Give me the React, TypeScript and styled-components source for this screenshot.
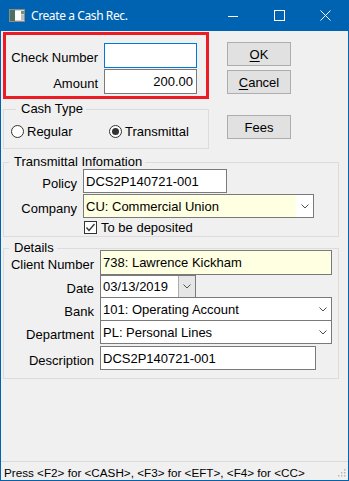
import styled, { createGlobalStyle } from "styled-components";

const GlobalStyle = createGlobalStyle`
  html, body {
    margin: 0;
    padding: 0;
    background: #ffffff;
  }
  body {
    font-family: "Liberation Sans", Arial, sans-serif;
    font-size: 13px;
    color: #000000;
  }
  * {
    box-sizing: border-box;
  }
`;

const Window = styled.div`
  width: 349px;
  height: 481px;
  display: flex;
  flex-direction: column;
  border: 1px solid #0063b1;
  border-top: none;
  background: #f0f0f0;
  overflow: hidden;
`;

const TitleBar = styled.div`
  height: 31px;
  flex-shrink: 0;
  background: #0063b1;
  display: flex;
  align-items: center;
  padding-left: 8px;
  color: #ffffff;
`;

const Title = styled.div`
  font-family: "Noto Sans", "Open Sans", sans-serif;
  font-size: 12px;
  letter-spacing: -0.4px;
  margin-left: 6px;
  flex: 1;
  white-space: nowrap;
`;

const CaptionButton = styled.div`
  width: 46px;
  height: 31px;
  display: flex;
  align-items: center;
  justify-content: center;
`;

const Body = styled.div`
  flex: 1;
  padding: 1px 0 0 2px;
  display: flex;
  flex-direction: column;
`;

const TopRow = styled.div`
  display: flex;
  align-items: flex-start;
`;

const LeftCol = styled.div`
  width: 206px;
  display: flex;
  flex-direction: column;
`;

const Highlight = styled.div`
  height: 67px;
  border: 3px solid #ed1c24;
  padding: 8px 0 0 0;
  display: grid;
  grid-template-columns: 92px 93px;
  grid-auto-rows: 25px;
  column-gap: 6px;
  row-gap: 1px;
`;

const Label = styled.div`
  text-align: right;
  white-space: nowrap;
  align-self: center;
  padding-top: 4px;
  line-height: 15px;
`;

const TextBox = styled.input<{ $w: number; $h: number; $focus?: boolean; $right?: boolean; $bg?: string }>`
  width: ${(p) => p.$w}px;
  height: ${(p) => p.$h}px;
  margin: 0;
  border: 1px solid ${(p) => (p.$focus ? "#0078d7" : "#7a7a7a")};
  background: ${(p) => p.$bg ?? "#ffffff"};
  font-family: "Liberation Sans", Arial, sans-serif;
  font-size: 13px;
  color: #000000;
  padding: 0 ${(p) => (p.$right ? 3 : 2)}px 0 2px;
  text-align: ${(p) => (p.$right ? "right" : "left")};
  outline: none;
`;

const ButtonCol = styled.div`
  margin: 10px 0 0 18px;
  display: flex;
  flex-direction: column;
`;

const Button = styled.div<{ $gap?: number }>`
  width: 64px;
  height: 24px;
  margin-top: ${(p) => p.$gap ?? 0}px;
  background: #e1e1e1;
  border: 1px solid #adadad;
  display: flex;
  align-items: center;
  justify-content: center;
  line-height: 15px;
  u {
    text-decoration: underline;
    text-underline-offset: 2px;
  }
`;

const Group = styled.fieldset<{ $w: number; $mt: number; $pb: number; $pl?: number }>`
  width: ${(p) => p.$w}px;
  margin: ${(p) => p.$mt}px 0 0 0;
  padding: 0 0 ${(p) => p.$pb}px ${(p) => p.$pl ?? 0}px;
  border: 1px solid #dcdcdc;
  min-width: 0;
`;

const Legend = styled.legend`
  margin-left: 5px;
  padding: 0 3px 0 5px;
  line-height: 14px;
  font-size: 13px;
  white-space: nowrap;
`;

const RadioRow = styled.div`
  margin-top: 8px;
  display: grid;
  grid-template-columns: 98px auto;
  height: 15px;
  align-items: center;
`;

const Option = styled.div`
  display: flex;
  align-items: center;
  gap: 3px;
  line-height: 15px;
`;

const RadioCircle = styled.span<{ $on?: boolean }>`
  width: 13px;
  height: 13px;
  border-radius: 50%;
  border: 1px solid #333333;
  background: #ffffff;
  display: flex;
  align-items: center;
  justify-content: center;
  &::after {
    content: "";
    width: 7px;
    height: 7px;
    border-radius: 50%;
    background: ${(p) => (p.$on ? "#333333" : "transparent")};
  }
`;

const Row = styled.div<{ $label: number; $h: number; $mt?: number }>`
  display: grid;
  grid-template-columns: ${(p) => p.$label}px auto;
  column-gap: 6px;
  height: ${(p) => p.$h}px;
  margin-top: ${(p) => p.$mt ?? 0}px;
  align-items: stretch;
  position: relative;
`;

const Combo = styled.div<{ $w: number }>`
  width: ${(p) => p.$w}px;
  border: 1px solid #7a7a7a;
  background: #ffffff;
  display: flex;
`;

const ComboText = styled.div<{ $bg?: string }>`
  flex: 1;
  background: ${(p) => p.$bg ?? "#ffffff"};
  padding-left: 2px;
  display: flex;
  align-items: center;
  white-space: nowrap;
`;

const ComboArrow = styled.div<{ $button?: boolean }>`
  width: 17px;
  display: flex;
  align-items: center;
  justify-content: center;
  background: ${(p) => (p.$button ? "#e6e6e6" : "#ffffff")};
  border-left: ${(p) => (p.$button ? "1px solid #adadad" : "none")};
`;

const CheckRow = styled.div`
  margin: 2px 0 0 80px;
  height: 14px;
  display: flex;
  align-items: center;
  gap: 4px;
  line-height: 15px;
`;

const CheckBox = styled.span`
  width: 13px;
  height: 13px;
  border: 1px solid #333333;
  background: #ffffff;
  display: flex;
  align-items: center;
  justify-content: center;
`;

const Spacer = styled.div`
  flex: 1;
`;

const StatusBar = styled.div`
  height: 19px;
  flex-shrink: 0;
  border-top: 1px solid #dadada;
  display: flex;
  align-items: center;
  padding: 2px 0 0 3px;
  font-size: 11.7px;
  white-space: nowrap;
`;

const Grip = styled.svg`
  margin-left: auto;
  margin-top: 4px;
  margin-right: 2px;
`;

function Chevron() {
  return (
    <svg width="8" height="5" viewBox="0 0 8 5">
      <polyline points="0.5,0.5 4,4 7.5,0.5" fill="none" stroke="#505050" strokeWidth="1" />
    </svg>
  );
}

function AppIcon() {
  return (
    <svg width="16" height="13" viewBox="0 0 16 13">
      <rect x="0.5" y="0.5" width="15" height="12" fill="#d4d4d4" stroke="#8c8c8c" />
      <rect x="1" y="1" width="5" height="11" fill="#4f6f5f" />
      <rect x="6" y="2" width="6" height="9" fill="#ffffff" />
      <rect x="12" y="2" width="3" height="3" fill="#6a9a6a" />
      <rect x="12" y="6" width="3" height="5" fill="#bcbcbc" />
    </svg>
  );
}

export default function App() {
  return (
    <>
      <GlobalStyle />
      <Window>
        <TitleBar>
          <AppIcon />
          <Title>Create a Cash Rec.</Title>
          <CaptionButton>
            <svg width="10" height="10" viewBox="0 0 10 10">
              <line x1="0" y1="5.5" x2="10" y2="5.5" stroke="#fff" strokeWidth="1" />
            </svg>
          </CaptionButton>
          <CaptionButton>
            <svg width="11" height="11" viewBox="0 0 11 11">
              <rect x="0.5" y="0.5" width="10" height="10" fill="none" stroke="#fff" strokeWidth="1" />
            </svg>
          </CaptionButton>
          <CaptionButton>
            <svg width="11" height="11" viewBox="0 0 11 11">
              <path d="M0.5 0.5 L10.5 10.5 M10.5 0.5 L0.5 10.5" stroke="#fff" strokeWidth="1" />
            </svg>
          </CaptionButton>
        </TitleBar>

        <Body>
          <TopRow>
            <LeftCol>
              <Highlight>
                <Label>Check Number</Label>
                <TextBox $w={93} $h={25} $focus readOnly defaultValue="" />
                <Label>Amount</Label>
                <TextBox $w={93} $h={25} $right readOnly defaultValue="200.00" />
              </Highlight>

              <Group $w={206} $mt={3} $pb={9} $pl={7}>
                <Legend>Cash Type</Legend>
                <RadioRow>
                  <Option>
                    <RadioCircle />
                    Regular
                  </Option>
                  <Option>
                    <RadioCircle $on />
                    Transmittal
                  </Option>
                </RadioRow>
              </Group>
            </LeftCol>

            <ButtonCol>
              <Button>
                <span>
                  <u>O</u>K
                </span>
              </Button>
              <Button $gap={4}>
                <span>
                  <u>C</u>ancel
                </span>
              </Button>
              <Button $gap={21}>Fees</Button>
            </ButtonCol>
          </TopRow>

          <Group $w={336} $mt={6} $pb={2}>
            <Legend>Transmittal Infomation</Legend>
            <Row $label={73} $h={24}>
              <Label>Policy</Label>
              <TextBox $w={144} $h={24} readOnly defaultValue="DCS2P140721-001" />
            </Row>
            <Row $label={73} $h={24} $mt={1}>
              <Label>Company</Label>
              <Combo $w={231}>
                <ComboText $bg="#ffffe1">CU: Commercial Union</ComboText>
                <ComboArrow>
                  <Chevron />
                </ComboArrow>
              </Combo>
            </Row>
            <CheckRow>
              <CheckBox>
                <svg width="11" height="11" viewBox="0 0 11 11">
                  <polyline points="1.5,5.5 4,8.5 9.5,2" fill="none" stroke="#333" strokeWidth="1.3" />
                </svg>
              </CheckBox>
              To be deposited
            </CheckRow>
          </Group>

          <Group $w={336} $mt={4} $pb={8}>
            <Legend>Details</Legend>
            <Row $label={90} $h={25} $mt={-5}>
              <Label>Client Number</Label>
              <TextBox $w={232} $h={25} $bg="#ffffe1" readOnly defaultValue="738: Lawrence Kickham" />
            </Row>
            <Row $label={90} $h={23}>
              <Label>Date</Label>
              <Combo $w={96}>
                <ComboText>03/13/2019</ComboText>
                <ComboArrow $button>
                  <Chevron />
                </ComboArrow>
              </Combo>
            </Row>
            <Row $label={90} $h={24} $mt={-1}>
              <Label>Bank</Label>
              <Combo $w={232}>
                <ComboText>101: Operating Account</ComboText>
                <ComboArrow>
                  <Chevron />
                </ComboArrow>
              </Combo>
            </Row>
            <Row $label={90} $h={24} $mt={-1}>
              <Label>Department</Label>
              <Combo $w={232}>
                <ComboText>PL: Personal Lines</ComboText>
                <ComboArrow>
                  <Chevron />
                </ComboArrow>
              </Combo>
            </Row>
            <Row $label={90} $h={24} $mt={2}>
              <Label>Description</Label>
              <TextBox $w={216} $h={24} readOnly defaultValue="DCS2P140721-001" />
            </Row>
          </Group>

          <Spacer />
        </Body>

        <StatusBar>
          Press &lt;F2&gt; for &lt;CASH&gt;, &lt;F3&gt; for &lt;EFT&gt;, &lt;F4&gt; for &lt;CC&gt;
          <Grip width="10" height="10" viewBox="0 0 10 10">
            {[
              [8, 0],
              [8, 3],
              [5, 3],
              [8, 6],
              [5, 6],
              [2, 6],
            ].map(([x, y]) => (
              <rect key={`${x}-${y}`} x={x} y={y} width="1.5" height="1.5" fill="#b8b8b8" />
            ))}
          </Grip>
        </StatusBar>
      </Window>
    </>
  );
}
